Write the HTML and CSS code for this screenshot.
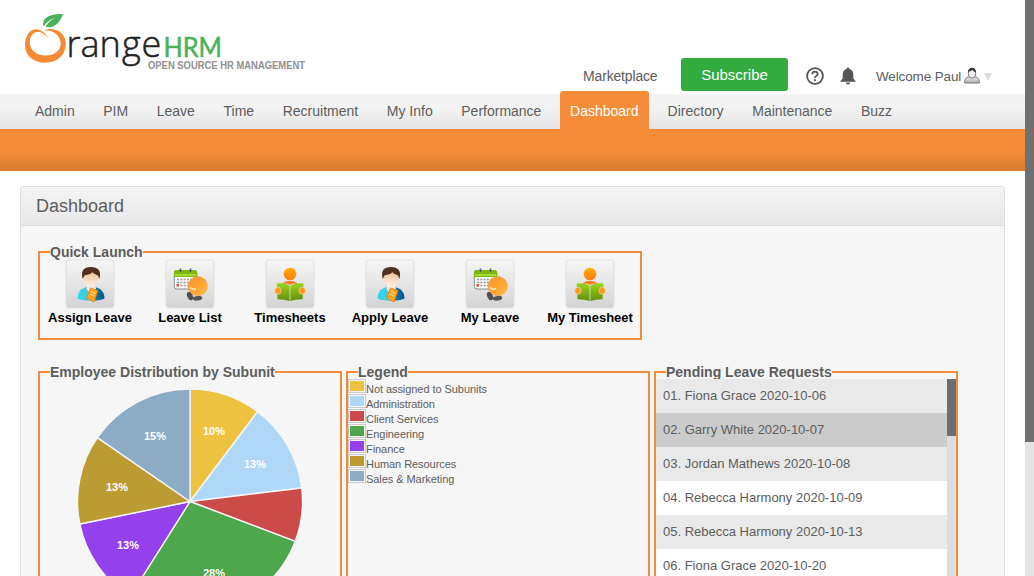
FILE: index.html
```html
<!DOCTYPE html>
<html lang="en">
<head>
<meta charset="utf-8">
<title>OrangeHRM</title>
<link rel="stylesheet" href="styles.css">
</head>
<body>
<svg class="defs" width="0" height="0" aria-hidden="true">
  <defs>
    <linearGradient id="tile" x1="0" y1="0" x2="0" y2="1"><stop offset="0" stop-color="#f6f6f6"/><stop offset="1" stop-color="#d3d3d3"/></linearGradient>
    <linearGradient id="ball" x1="0" y1="0" x2="1" y2="1"><stop offset="0" stop-color="#ff9634"/><stop offset=".55" stop-color="#fda52f"/><stop offset="1" stop-color="#ffc04a"/></linearGradient>
    <linearGradient id="shirt" x1="0" y1="0" x2="1" y2="0"><stop offset="0" stop-color="#2bd8ef"/><stop offset=".45" stop-color="#4bc7e2"/><stop offset=".6" stop-color="#137cb0"/><stop offset="1" stop-color="#075784"/></linearGradient>
    <linearGradient id="face" x1="0" y1="0" x2="0" y2="1"><stop offset="0" stop-color="#e5b68d"/><stop offset="1" stop-color="#fff0df"/></linearGradient>
    <linearGradient id="book" x1="0" y1="0" x2="0" y2="1"><stop offset="0" stop-color="#9bd51c"/><stop offset="1" stop-color="#648d0c"/></linearGradient>
    <linearGradient id="head" x1="0" y1="0" x2="0" y2="1"><stop offset="0" stop-color="#ffb000"/><stop offset="1" stop-color="#ff7d13"/></linearGradient>
    <linearGradient id="user" x1="0" y1="0" x2="0" y2="1"><stop offset="0" stop-color="#eee"/><stop offset="1" stop-color="#aaa"/></linearGradient>
    <symbol id="person" viewBox="0 0 50 50">
      <rect x="1" y="1" width="48" height="48" rx="3.5" fill="url(#tile)" stroke="#e2e2de" stroke-width="1.2"/>
      <path d="M12.500 39.500C13 32 16 29.500 22 28L30 28C36 29.500 39.500 33 39.500 39.500C34 42.500 18 42.500 12.500 39.500Z" fill="url(#shirt)"/>
      <path d="M22 26L21.500 30L26 36L31 29.500L30 25Z" fill="#f5e7dc"/>
      <ellipse cx="26" cy="18.500" rx="7.500" ry="8.800" fill="url(#face)"/>
      <path d="M17.800 20C15.500 12 18.500 8 26 8C33 8 37 12 34.300 20L33 16.500C30 15 28 14.500 27.500 13C25 16 21 15.500 19.500 16.500Z" fill="#50301f"/>
      <path d="M25.500 29L33 31.500L29 43L21.500 39Z" fill="#ffa41d" stroke="#ee7a0b" stroke-width=".8"/>
      <path d="M26 32.500L30.500 34.500M25 35L29.500 37" stroke="#ffe08c" stroke-width="1"/>
    </symbol>
    <symbol id="calendar" viewBox="0 0 50 50">
      <rect x="1" y="1" width="48" height="48" rx="3.5" fill="url(#tile)" stroke="#e2e2de" stroke-width="1.2"/>
      <rect x="9.300" y="11.500" width="22.500" height="18.500" rx="2.500" fill="#fafafa" stroke="#8b8b8b"/>
      <path d="M9 18V13.500Q9 11 11.500 11H29.500Q32 11 32 13.500V18Z" fill="#7eb80e"/>
      <path d="M10 16H31" stroke="#a6d83b" stroke-width="2"/>
      <path d="M15.500 9.500V13M25.500 9.500V13" stroke="#585858" stroke-width="1.600"/>
      <path d="M12 20.500H30M12 23.500H28M12 26.500H25" stroke="#9b9b9b" stroke-width="1.400" stroke-dasharray="2 1.300"/>
      <rect x="11.500" y="25" width="2.500" height="2.500" fill="#d75748"/>
      <ellipse cx="25" cy="37" rx="2.700" ry="4.500" fill="#4f4f4f" transform="rotate(-25 25 37)"/>
      <ellipse cx="32.500" cy="39.300" rx="4.800" ry="2.300" fill="#555" transform="rotate(-7 32 39)"/>
      <circle cx="32.700" cy="27" r="9.600" fill="url(#ball)" stroke="#eb922e" stroke-width=".5"/>
      <path d="M25 28.500Q28 31.500 31 29.500" fill="none" stroke="#ffe2b4" stroke-width="1.800"/>
    </symbol>
    <symbol id="reader" viewBox="0 0 50 50">
      <rect x="1" y="1" width="48" height="48" rx="3.5" fill="url(#tile)" stroke="#e2e2de" stroke-width="1.2"/>
      <circle cx="25" cy="15" r="6.300" fill="url(#head)"/>
      <path d="M17 25C19 22.500 22 22 25 22C28 22 31 22.500 33 25Q28 23.500 25 26Q22 23.500 17 25Z" fill="#f67b21"/>
      <path d="M11.700 24.500C17 24 21.500 24.500 24.600 27V42C21 40.500 17 41 12.500 40.300Z" fill="url(#book)"/>
      <path d="M38.500 24.500C33 24 28.500 24.500 25.400 27V42C29 40.500 33 41 37.600 40.300Z" fill="url(#book)"/>
      <ellipse cx="13" cy="31.800" rx="3.200" ry="3.500" fill="#ff9816" stroke="#e6e2d0" stroke-width=".6"/>
      <ellipse cx="37.200" cy="31.800" rx="3.200" ry="3.500" fill="#ff9816" stroke="#e6e2d0" stroke-width=".6"/>
    </symbol>
  </defs>
</svg>
<div class="window">
  <div class="page">
    <header class="header">
      <svg class="logo" width="300" height="66" viewBox="20 8 300 66">
        <path d="M48.300 39.500C46.500 33 40 28.500 34 29.500C28 31 25 38 25 45C25 56 34 62.700 45 62.700C58 62.700 65.800 54.500 65.800 43.500C65.800 34 58 29 50.500 29C48.500 29 46 29.500 44.500 30.500C54 30 60.700 36 60.700 43.500C60.700 51 54 55.500 45.500 55.500C36 55.500 29.800 50 29.800 42C29.800 36 33 32.300 37.500 32C42 31.800 46 34.500 48.300 39.500Z" fill="#f58a35"/>
        <path d="M43.500 26.500C42 20 46 13.800 63 14C60 23 54 29 45.500 26.800C48 22.500 51.500 19.500 56 17.500C50.500 19 46.500 22 43.500 26.500Z" fill="#4bb25a"/>
        <text class="logo-range" x="66.500 80.500 99.500 122 141.500" y="57">range</text>
        <text class="logo-hrm" x="163.500" y="56.500" textLength="58.500" lengthAdjust="spacingAndGlyphs">HRM</text>
        <text class="logo-tag" x="148" y="69" textLength="157" lengthAdjust="spacingAndGlyphs">OPEN SOURCE HR MANAGEMENT</text>
      </svg>
      <div class="account">
        <span class="market">Marketplace</span>
        <span class="subscribe">Subscribe</span>
        <svg class="help" width="18" height="18" viewBox="0 0 18 18"><circle cx="9" cy="9" r="7.900" fill="none" stroke="#555" stroke-width="1.800"/><path d="M6.300 7.300C6.300 3.800 11.700 3.900 11.700 7C11.700 8.900 9 8.900 9 10.900" fill="none" stroke="#555" stroke-width="1.800"/><circle cx="9" cy="13.200" r="1.100" fill="#555"/></svg>
        <svg class="bell" width="16" height="18" viewBox="0 0 16 18"><path d="M8 .5C9 .5 9.500 1.200 9.400 2C12 2.700 13.300 4.800 13.300 7.500V11.500L15.500 14V14.800H.5V14L2.700 11.500V7.500C2.700 4.800 4 2.700 6.600 2C6.500 1.200 7 .5 8 .5ZM6 15.500H10C10 18 6 18 6 15.500Z" fill="#555"/></svg>
        <span class="welcome">Welcome Paul</span>
        <svg class="avatar" width="16" height="17" viewBox="0 0 16 17"><path d="M.7 16C.5 12 2 10.500 5 10H11C14 10.500 15.500 12 15.300 16Z" fill="url(#user)" stroke="#777"/><ellipse cx="8" cy="6.300" rx="3.700" ry="4.800" fill="#eee" stroke="#777"/><path d="M4 5.500C3.500-.8 12.500-.8 12 5.500C10.500 5 9.500 4 8.500 3C7.500 4 5.500 4 4 5.500Z" fill="#333"/></svg>
        <svg class="caret" width="8" height="8" viewBox="0 0 8 8"><path d="M0 0H8L4 8Z" fill="#dcdcdc"/></svg>
      </div>
    </header>
    <nav class="nav">
      <span>Admin</span><span>PIM</span><span>Leave</span><span>Time</span><span>Recruitment</span><span>My Info</span><span>Performance</span><span class="active">Dashboard</span><span>Directory</span><span>Maintenance</span><span>Buzz</span>
    </nav>
    <div class="subnav"></div>
    <main class="panel">
      <h1>Dashboard</h1>
      <div class="body">
        <fieldset class="quick">
          <legend>Quick Launch</legend>
          <div class="shortcuts">
            <div><svg width="50" height="50"><use href="#person"/></svg><b>Assign Leave</b></div>
            <div><svg width="50" height="50"><use href="#calendar"/></svg><b>Leave List</b></div>
            <div><svg width="50" height="50"><use href="#reader"/></svg><b>Timesheets</b></div>
            <div><svg width="50" height="50"><use href="#person"/></svg><b>Apply Leave</b></div>
            <div><svg width="50" height="50"><use href="#calendar"/></svg><b>My Leave</b></div>
            <div><svg width="50" height="50"><use href="#reader"/></svg><b>My Timesheet</b></div>
          </div>
        </fieldset>
        <div class="widgets">
          <fieldset>
            <legend>Employee Distribution by Subunit</legend>
            <svg class="pie" width="300" height="240" viewBox="40 379 300 240">
              <g stroke="#f6f6f6" stroke-width="1.400" stroke-linejoin="round">
                <path fill="#edc240" d="M190 501.500V389A112.500 112.500 0 0 1 257.600 411.600Z"/>
                <path fill="#afd8f8" d="M190 501.500L257.600 411.600A112.500 112.500 0 0 1 301.700 488Z"/>
                <path fill="#cb4b4b" d="M190 501.500L301.700 488A112.500 112.500 0 0 1 295.200 541.400Z"/>
                <path fill="#4da74d" d="M190 501.500L295.200 541.400A112.500 112.500 0 0 1 129.900 596.600Z"/>
                <path fill="#9440ed" d="M190 501.500L129.900 596.600A112.500 112.500 0 0 1 79.800 524Z"/>
                <path fill="#bd9b33" d="M190 501.500L79.800 524A112.500 112.500 0 0 1 97.400 437.600Z"/>
                <path fill="#8cacc6" d="M190 501.500L97.400 437.600A112.500 112.500 0 0 1 190 389Z"/>
              </g>
              <g class="share">
                <text x="214" y="435">10%</text><text x="255" y="468">13%</text><text x="214" y="577">28%</text>
                <text x="128" y="549">13%</text><text x="117" y="491">13%</text><text x="155" y="440">15%</text>
              </g>
            </svg>
          </fieldset>
          <fieldset>
            <legend>Legend</legend>
            <ul class="key">
              <li><i class="unassigned"></i>Not assigned to Subunits</li>
              <li><i class="administration"></i>Administration</li>
              <li><i class="client"></i>Client Services</li>
              <li><i class="engineering"></i>Engineering</li>
              <li><i class="finance"></i>Finance</li>
              <li><i class="human"></i>Human Resources</li>
              <li><i class="sales"></i>Sales &amp; Marketing</li>
            </ul>
          </fieldset>
          <fieldset>
            <legend>Pending Leave Requests</legend>
            <div class="pending">
              <ul class="requests">
                <li>01. Fiona Grace 2020-10-06</li>
                <li class="hover">02. Garry White 2020-10-07</li>
                <li>03. Jordan Mathews 2020-10-08</li>
                <li>04. Rebecca Harmony 2020-10-09</li>
                <li>05. Rebecca Harmony 2020-10-13</li>
                <li>06. Fiona Grace 2020-10-20</li>
              </ul>
              <div class="list-scroll"><div></div></div>
            </div>
          </fieldset>
        </div>
      </div>
    </main>
  </div>
  <div class="page-scroll"><div></div></div>
</div>
</body>
</html>
```

FILE: styles.css
```css
* { box-sizing: border-box; }
body { margin: 0; overflow: hidden; background: #fff; color: #5d5d5d; font: 14px "Liberation Sans", Arial, sans-serif; }
ul { list-style: none; margin: 0; padding: 0; }
svg { display: block; flex: none; }
.defs { position: absolute; }
.window { display: flex; height: 576px; overflow: hidden; }
.page { width: 1025px; flex: none; }
.page-scroll { flex: 1; background: #e5e5e5; }
.page-scroll div { height: 442px; background: #707070; }

.header { display: flex; justify-content: space-between; height: 94px; padding: 8px 33px 0 20px; }
.logo-range { font: 300 36px "Open Sans", sans-serif; fill: #222; stroke: #222; stroke-width: .5; }
.logo-hrm { font: 400 27px Lato, sans-serif; fill: #4bb25a; stroke: #4bb25a; stroke-width: .5; }
.logo-tag { font: bold 10px "Liberation Sans", sans-serif; fill: #8f8f8f; }
.account { display: flex; align-items: center; height: 33px; margin-top: 50px; white-space: nowrap; }
.market { width: 98px; padding-top: 3px; letter-spacing: -.16px; }
.subscribe { width: 107px; height: 33px; border-radius: 3px; background: #33ac3f; color: #fff; font-size: 15px; line-height: 33px; text-align: center; }
.help { margin: 3px 0 0 18px; }
.bell { margin: 3px 0 0 16px; }
.welcome { width: 87px; margin: 3px 0 0 20px; font-size: 13.5px; letter-spacing: -.14px; }
.avatar { margin: 2px 0 0 1px; }
.caret { margin: 5px 0 0 4px; }

.nav { display: flex; align-items: flex-end; gap: 8.6px; height: 35px; padding-left: 25px; background: linear-gradient(#f3f3f3 40%, #e5e5e5); }
.nav span { height: 38px; padding: 0 10px; line-height: 40px; white-space: nowrap; }
.nav .active { padding-right: 10.5px; border-radius: 3px 3px 0 0; background: #f58d38; color: #fff; }
.subnav { height: 42px; background: linear-gradient(#f58d38 50%, #d97b30); }

.panel { height: 500px; margin: 15px 20px 0; border: 1px solid #dedede; border-radius: 3px 3px 0 0; background: #f6f6f6; }
.panel h1 { height: 39px; margin: 0; padding-left: 15px; border-bottom: 1px solid #dedede; background: linear-gradient(#f4f4f4, #e8e8e8); font-size: 18px; font-weight: 400; line-height: 38px; }
.body { padding: 19px 0 0 17px; }
fieldset { width: 304px; min-width: 0; height: 260px; margin: 0; padding: 0; border: 2px solid #f28c38; }
legend { margin-left: 10px; padding: 0; font-size: 14px; font-weight: bold; line-height: 14px; }
.quick { width: 604px; height: 95px; }
.shortcuts { display: flex; color: #000; font-size: 13px; }
.shortcuts div { display: flex; flex-direction: column; align-items: center; width: 100px; flex: none; white-space: nowrap; }
.shortcuts b { line-height: 17px; }
.widgets { display: flex; gap: 4px; margin-top: 25px; }
.share { font: bold 11px "Liberation Sans", sans-serif; fill: #fff; text-anchor: middle; }

.key { font-size: 11px; letter-spacing: -.06px; }
.key li { display: flex; height: 15px; line-height: 21px; white-space: nowrap; }
.key i { width: 18px; height: 14px; flex: none; padding: 1px; border: 1px solid #ccc; background: #fff content-box; }
.key .unassigned { background-color: #edc240; }
.key .administration { background-color: #afd8f8; }
.key .client { background-color: #cb4b4b; }
.key .engineering { background-color: #4da74d; }
.key .finance { background-color: #9440ed; }
.key .human { background-color: #bd9b33; }
.key .sales { background-color: #8cacc6; }

.pending { display: flex; }
.requests { width: 291px; }
.requests li { height: 34px; padding-left: 7px; background: #fff; font-size: 13px; line-height: 33px; white-space: nowrap; }
.requests li:nth-child(odd) { background: #e9e9e9; }
.requests li.hover { background: #cbcbcb; }
.list-scroll { width: 9px; background: #dcdcdc; }
.list-scroll div { height: 57px; background: #6e6e6e; }
```
